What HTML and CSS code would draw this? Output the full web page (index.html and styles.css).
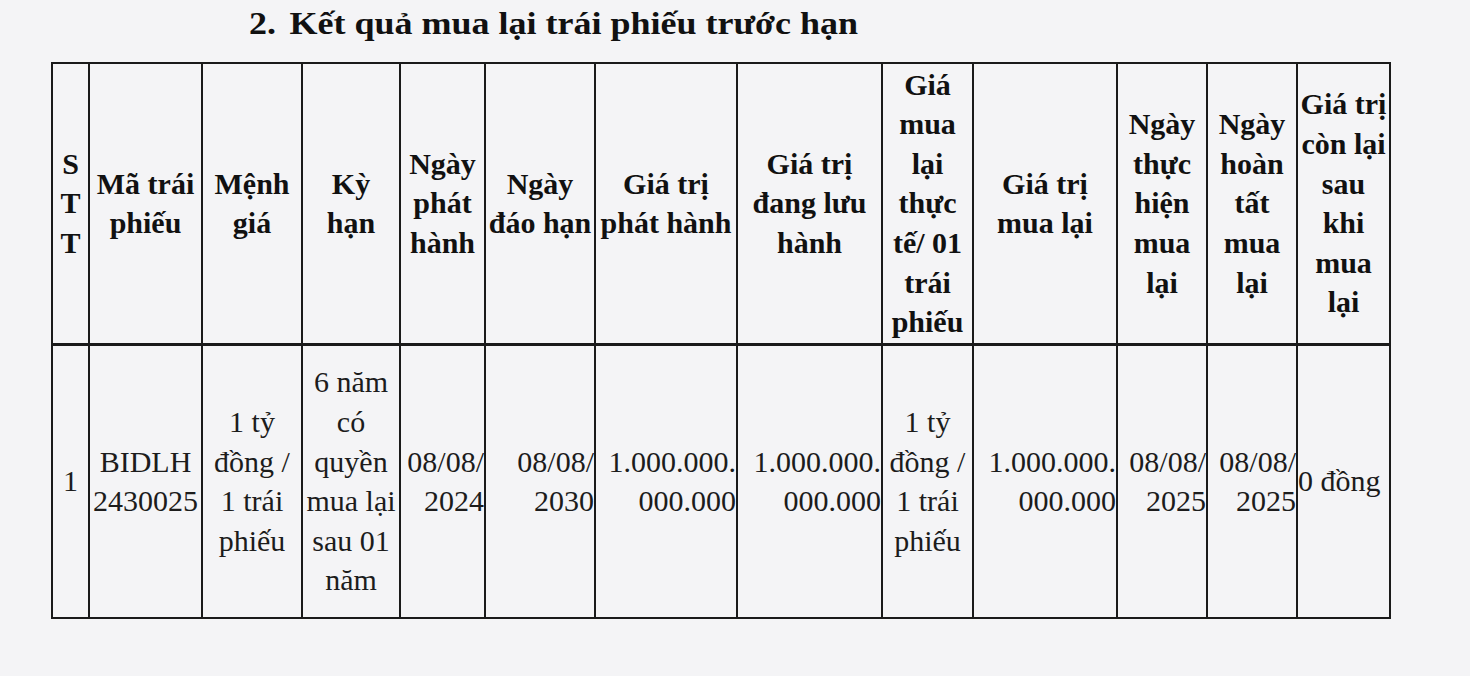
FILE: index.html
```html
<!DOCTYPE html>
<html lang="vi">
<head>
<meta charset="utf-8">
<title>Kết quả mua lại trái phiếu trước hạn</title>
<link rel="stylesheet" href="styles.css">
</head>
<body>
<div class="page">
  <h2 class="title"><span class="num">2.</span>Kết quả mua lại trái phiếu trước hạn</h2>
  <table class="bonds">
    <colgroup>
      <col class="c1"><col class="c2"><col class="c3"><col class="c4"><col class="c5"><col class="c6"><col class="c7"><col class="c8"><col class="c9"><col class="c10"><col class="c11"><col class="c12"><col class="c13">
    </colgroup>
    <thead>
      <tr class="head">
        <th>S<br>T<br>T</th>
        <th>Mã trái<br>phiếu</th>
        <th>Mệnh<br>giá</th>
        <th>Kỳ<br>hạn</th>
        <th>Ngày<br>phát<br>hành</th>
        <th>Ngày<br>đáo hạn</th>
        <th>Giá trị<br>phát hành</th>
        <th>Giá trị<br>đang lưu<br>hành</th>
        <th>Giá<br>mua<br>lại<br>thực<br>tế/ 01<br>trái<br>phiếu</th>
        <th>Giá trị<br>mua lại</th>
        <th>Ngày<br>thực<br>hiện<br>mua<br>lại</th>
        <th>Ngày<br>hoàn<br>tất<br>mua<br>lại</th>
        <th>Giá trị<br>còn lại<br>sau<br>khi<br>mua<br>lại</th>
      </tr>
    </thead>
    <tbody>
      <tr class="row">
        <td class="ctr">1</td>
        <td class="ctr">BIDLH<br>2430025</td>
        <td class="ctr">1 tỷ<br>đồng /<br>1 trái<br>phiếu</td>
        <td class="ctr">6 năm<br>có<br>quyền<br>mua lại<br>sau 01<br>năm</td>
        <td class="rgt">08/08/<br>2024</td>
        <td class="rgt">08/08/<br>2030</td>
        <td class="rgt">1.000.000.<br>000.000</td>
        <td class="rgt">1.000.000.<br>000.000</td>
        <td class="ctr">1 tỷ<br>đồng /<br>1 trái<br>phiếu</td>
        <td class="rgt">1.000.000.<br>000.000</td>
        <td class="rgt">08/08/<br>2025</td>
        <td class="rgt">08/08/<br>2025</td>
        <td class="lft">0 đồng</td>
      </tr>
    </tbody>
  </table>
</div>
</body>
</html>
```

FILE: styles.css
```css
html, body {
  margin: 0;
  padding: 0;
  background: #f4f4f6;
}

body {
  font-family: "Liberation Serif", "Times New Roman", serif;
  color: #141414;
  width: 1470px;
  height: 676px;
  overflow: hidden;
}

.page {
  padding: 3px 0 0 51px;
}

.title {
  width: max-content;
  margin: 0 0 19px 198px;
  font-size: 32px;
  line-height: 40px;
  font-weight: bold;
  white-space: nowrap;
  transform: scaleX(1.125);
  transform-origin: left center;
  color: #111;
}

.title .num {
  margin-right: 12px;
}

.bonds {
  border-collapse: collapse;
  table-layout: fixed;
  width: 1338px;
  border: 2.5px solid #161616;
  font-size: 30px;
  line-height: 39.6px;
}

.c1 { width: 37px; }
.c2 { width: 113px; }
.c3 { width: 100px; }
.c4 { width: 98px; }
.c5 { width: 85px; }
.c6 { width: 110px; }
.c7 { width: 142px; }
.c8 { width: 145px; }
.c9 { width: 91px; }
.c10 { width: 144px; }
.c11 { width: 90px; }
.c12 { width: 90px; }
.c13 { width: 93px; }

.bonds th,
.bonds td {
  border: 2px solid #1a1a1a;
  padding: 0;
  vertical-align: middle;
  white-space: nowrap;
  overflow: visible;
}

.bonds th {
  font-weight: bold;
  text-align: center;
  color: #111;
}

.head {
  height: 281px;
}

.head th {
  border-bottom-width: 3px;
}

.row {
  height: 274px;
}

.bonds td {
  font-weight: normal;
  color: #1c1c1c;
}

.ctr { text-align: center; }
.rgt { text-align: right; padding-right: 1px; }
.lft { text-align: left; padding-left: 2px; }
```
